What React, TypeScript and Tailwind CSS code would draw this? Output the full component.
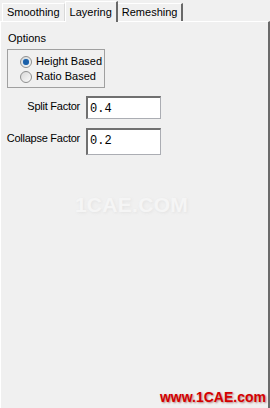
import React from "react";

const font = { fontFamily: '"Liberation Sans", Arial, sans-serif' };

const Radio: React.FC<{ checked?: boolean; label: string }> = ({ checked, label }) => (
  <div className="flex items-center gap-[4px] h-[15px]">
    <span className="w-[12px] h-[12px] rounded-full border border-[#8e8f8f] bg-gradient-to-br from-[#d8d8d8] to-[#fbfbfb] flex items-center justify-center">
      {checked && <span className="w-[6px] h-[6px] rounded-full bg-[#1a5fa8] shadow-[0_0_1px_#6bb3ec]" />}
    </span>
    <span>{label}</span>
  </div>
);

const Field: React.FC<{ label: string; value: string; h: string }> = ({ label, value, h }) => (
  <div className="flex items-start">
    <div className="w-[80px] text-right pr-[1px] pt-[2px] tracking-[-0.25px]">{label}</div>
    <div className={`ml-[5px] w-[75px] ${h} bg-white border border-[#abadb3] border-t-[#707070] border-l-[#707070] border-t-2 border-l-2 px-[2px] pt-[2px]`}>
      <span style={{ fontFamily: '"Liberation Mono", monospace' }} className="text-[12px] text-black">{value}</span>
    </div>
  </div>
);

export default function App() {
  return (
    <div className="w-[270px] h-[408px] bg-[#f0f0f0] text-[11px] text-black relative overflow-hidden" style={font}>
      {/* Tabs */}
      <div className="flex items-end h-[21px] pl-[2px]">
        <div className="h-[18px] px-[4px] border border-b-0 border-[#d9d9d9] border-t-white border-l-white bg-[#f0f0f0] flex items-center">Smoothing</div>
        <div className="h-[21px] px-[4px] border-t border-l border-white border-r-2 border-r-[#696969] bg-[#f0f0f0] flex items-center relative top-[1px] z-10">Layering</div>
        <div className="h-[18px] px-[4px] border-t border-white border-r-2 border-r-[#696969] bg-[#f0f0f0] flex items-center">Remeshing</div>
      </div>

      {/* Pane */}
      <div className="h-[387px] border-t border-l border-white border-r-2 border-r-[#6a6a6a] pl-[6px] pt-[10px]">
        <div className="text-[#000] leading-[12px] pl-[1px]">Options</div>
        <div className="mt-[5px] w-[98px] h-[39px] border border-[#a0a0a0] pl-[12px] pt-[4px]">
          <Radio checked label="Height Based" />
          <Radio label="Ratio Based" />
        </div>

        <div className="mt-[8px] -ml-[6px]">
          <Field label="Split Factor" value="0.4" h="h-[23px]" />
          <div className="h-[9px]" />
          <Field label="Collapse Factor" value="0.2" h="h-[27px]" />
        </div>

        <div className="mt-[34px] flex justify-center pr-[12px]">
          <span className="text-[21px] font-bold text-[#f5f5f5] tracking-[0.3px] [text-shadow:1px_1px_3px_#e2e2e2]">1CAE.COM</span>
        </div>

        <div className="mt-[166px] flex justify-end pr-[2px]">
          <span className="text-[14px] font-bold text-[#d40000] [text-shadow:1px_1px_2px_#b08080]">www.1CAE.com</span>
        </div>
      </div>
    </div>
  );
}
